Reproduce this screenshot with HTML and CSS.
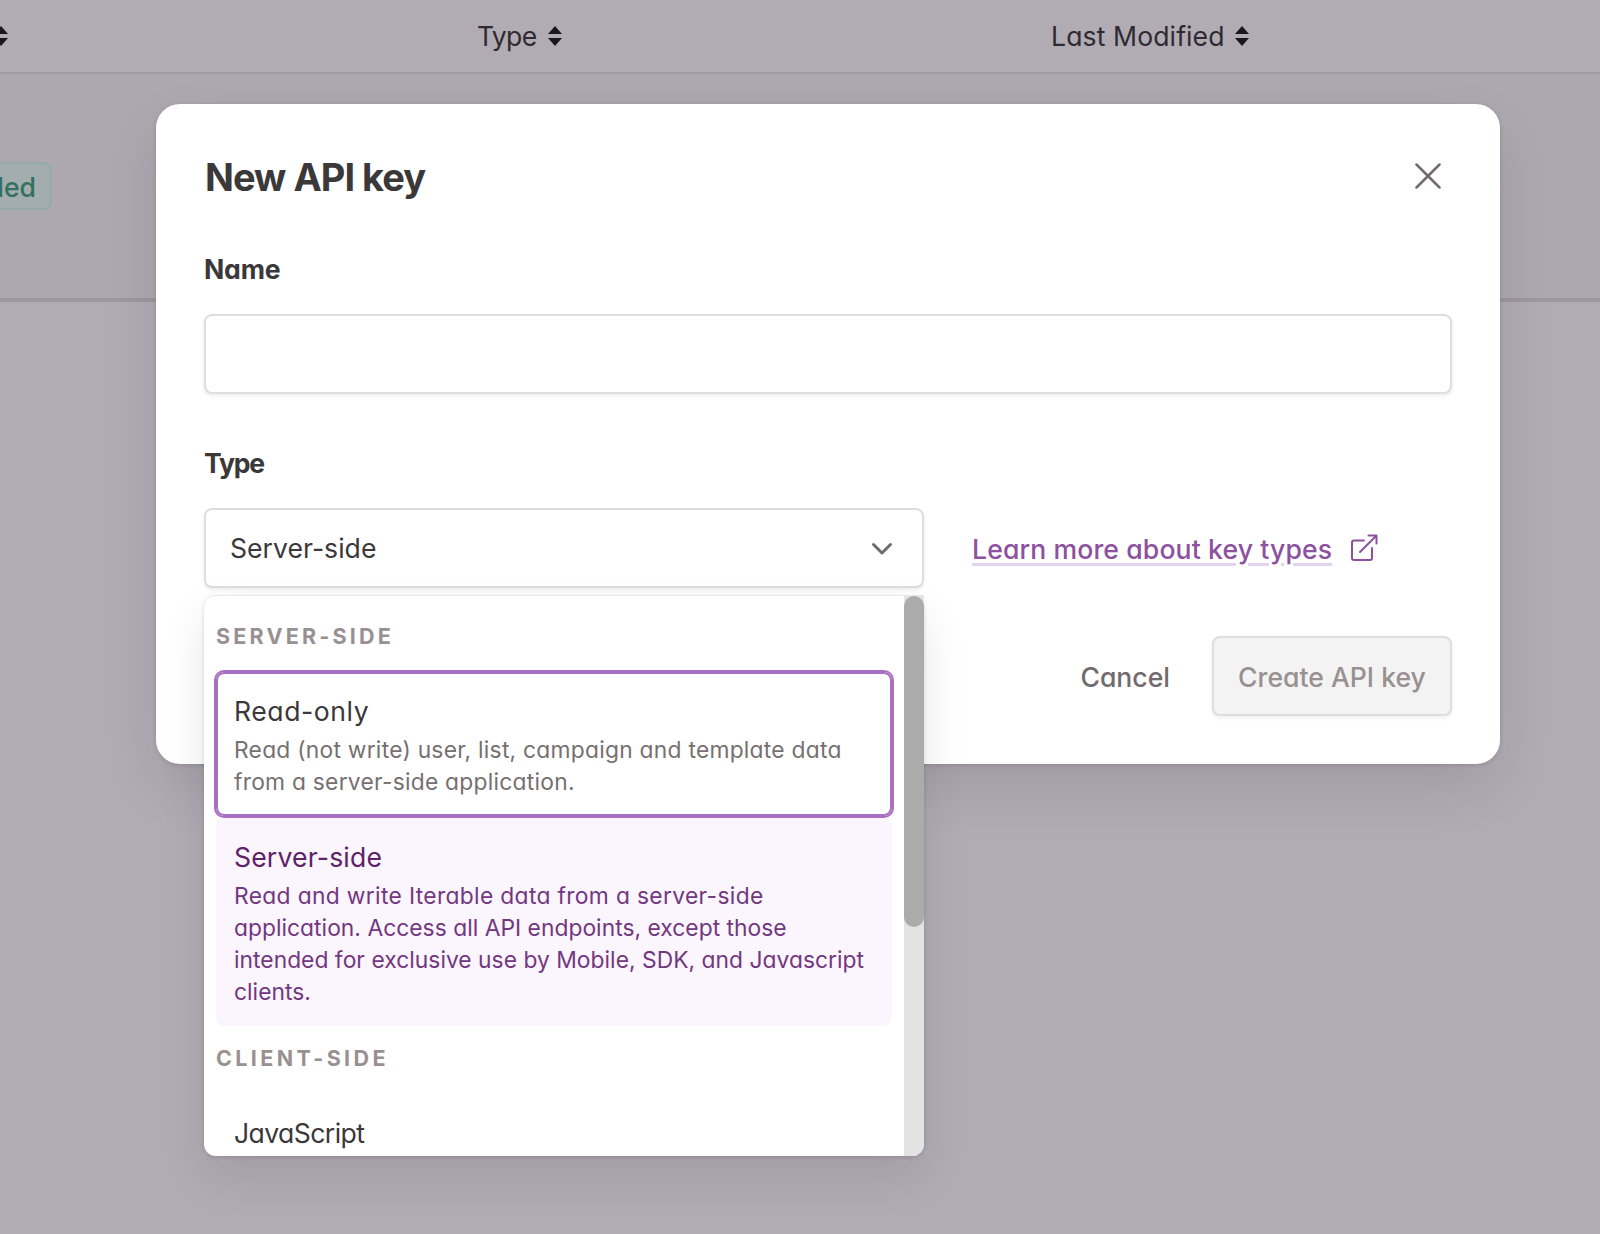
FILE: index.html
```html
<!DOCTYPE html>
<html lang="en">
<head>
<meta charset="utf-8">
<title>New API key</title>
<link rel="stylesheet" href="styles.css">
</head>
<body>
<div class="page">
  <header class="table-head">
    <div class="col"><svg class="sort" viewBox="0 0 14 20"><path d="M7 0l7 8H0zM7 20l7-8H0z"/></svg></div>
    <div class="col"><span class="type-head">Type</span><svg class="sort" viewBox="0 0 14 20"><path d="M7 0l7 8H0zM7 20l7-8H0z"/></svg></div>
    <div class="col"><span class="modified-head">Last Modified</span><svg class="sort" viewBox="0 0 14 20"><path d="M7 0l7 8H0zM7 20l7-8H0z"/></svg></div>
  </header>
  <div class="table-row"><div class="status"><span class="badge">Enabled</span></div></div>
</div>
<main class="modal">
  <div class="modal-head">
    <h1>New API key</h1>
    <svg class="close" viewBox="0 0 26 26"><path d="M1.5 1.5l23 23M24.5 1.5l-23 23"/></svg>
  </div>
  <label class="name-label">Name</label>
  <input class="control name" type="text">
  <label class="type-label">Type</label>
  <div class="type-row">
    <div class="select-wrap">
      <div class="control select"><span>Server-side</span>
        <svg class="chevron" viewBox="0 0 22 14"><path d="M2.5 2.5L11 11l8.500-8.500"/></svg>
      </div>
      <div class="dropdown">
        <div class="options">
          <div class="group">SERVER-SIDE</div>
          <div class="option focused">
            <div class="option-title read">Read-only</div>
            <div class="desc"><span>Read (not write) user, list, campaign and template data</span><span>from a server-side application.</span></div>
          </div>
          <div class="option selected">
            <div class="option-title server">Server-side</div>
            <div class="desc"><span class="wide">Read and write Iterable data from a server-side</span><span class="tight">application. Access all API endpoints, except those</span><span class="tight">intended for exclusive use by Mobile, SDK, and Javascript</span><span class="tight">clients.</span></div>
          </div>
          <div class="group client">CLIENT-SIDE</div>
          <div class="option last"><div class="option-title js">JavaScript</div></div>
        </div>
        <div class="track"><div class="thumb"></div></div>
      </div>
    </div>
    <a class="learn"><span>Learn more about key types</span>
      <svg class="external" viewBox="0 0 28 28"><path d="M14 6.500H4a2 2 0 0 0-2 2V24a2 2 0 0 0 2 2h16a2 2 0 0 0 2-2V14M18.500 1.500h8v8M26.500 1.500L10 18"/></svg>
    </a>
  </div>
  <div class="actions">
    <span class="cancel">Cancel</span>
    <button class="control create" disabled>Create API key</button>
  </div>
</main>
</body>
</html>
```
FILE: styles.css
```css
* { box-sizing: border-box; }
body {
  margin: 0;
  height: 1234px;
  overflow: hidden;
  position: relative;
  background: #b1acb3;
  color: #3b3839;
  font: 430 26.6px/40px Inter, "Noto Sans", sans-serif;
  font-feature-settings: "cv11" 1;
}
svg { display: block; flex: none; }

.table-head {
  display: grid;
  grid-template-columns: 477px 574px 1fr;
  height: 74px;
  border-bottom: 2px solid #9f99a0;
  color: #2f2a31;
}
.col { display: flex; align-items: center; gap: 12px; white-space: nowrap; }
.col:first-child { margin-left: -6px; }
.sort { width: 14px; height: 20px; fill: #1b161d; }
.type-head { letter-spacing: -.7px; }
.modified-head { margin-right: -2px; letter-spacing: .1px; }
.table-row {
  display: flex;
  align-items: center;
  height: 228px;
  background: #ada8af;
  border-bottom: 4px solid #9d979e;
}
.status { display: flex; justify-content: flex-end; width: 52px; }
.badge {
  display: flex;
  align-items: center;
  height: 48px;
  padding: 1px 14px 0;
  border: 2px solid #94aaa8;
  border-radius: 8px;
  background: #a3adb0;
  color: #35705f;
  font-weight: 500;
}

.modal {
  position: absolute;
  left: 156px;
  top: 104px;
  width: 1344px;
  height: 660px;
  padding: 48px;
  border-radius: 24px;
  background: #fff;
  box-shadow: 0 24px 56px -4px rgba(30, 20, 35, .12), 0 1px 4px rgba(30, 20, 35, .14);
  display: flex;
  flex-direction: column;
}
.modal-head {
  display: flex;
  align-items: center;
  justify-content: space-between;
  height: 50px;
  margin-bottom: 46px;
  padding: 0 11px 0 1px;
}
h1 { margin: 0; font-size: 38px; font-weight: 650; letter-spacing: -1px; }
.close { width: 26px; height: 26px; margin-top: -2px; fill: none; stroke: #716b6d; stroke-width: 2.500; stroke-linecap: round; }
label { height: 40px; margin-bottom: 26px; padding-top: 1px; font-weight: 650; }
.name-label { letter-spacing: -.2px; }
.type-label { letter-spacing: -1.2px; }
.control {
  height: 80px;
  border: 2px solid #dedede;
  border-radius: 8px;
  background: #fff;
  box-shadow: 0 2px 4px rgba(0, 0, 0, .07);
}
.name { width: 100%; margin-bottom: 48px; }
.type-row { display: flex; gap: 48px; margin-bottom: 48px; }
.select-wrap { position: relative; width: 720px; }
.select {
  display: flex;
  align-items: center;
  justify-content: space-between;
  padding: 0 29px 0 24px;
}
.chevron { width: 22px; height: 14px; margin-top: 2px; fill: none; stroke: #716b6d; stroke-width: 3; stroke-linecap: round; stroke-linejoin: round; }
.learn { display: flex; align-items: center; gap: 18px; color: #8d519f; font-weight: 550; letter-spacing: .12px; }
.learn span {
  padding-top: 1px;
  text-decoration: underline;
  text-decoration-color: #e4d3ee;
  text-decoration-thickness: 3px;
  text-underline-offset: 4px;
}
.external { width: 28px; height: 28px; fill: none; stroke: #8d519f; stroke-width: 2; stroke-linecap: round; stroke-linejoin: round; }
.actions { display: flex; align-items: center; justify-content: flex-end; gap: 42px; }
.cancel { padding-top: 1px; color: #716b6d; font-weight: 450; }
.create {
  width: 240px;
  padding: 1px 0 0;
  background: #f3f3f3;
  color: #999092;
  font: inherit;
  font-weight: 450;
  font-feature-settings: inherit;
}

.dropdown {
  position: absolute;
  left: 0;
  top: 87px;
  width: 720px;
  height: 561px;
  display: flex;
  border-top: 1px solid #e9e8e9;
  border-radius: 12px 0 12px 12px;
  background: #fff;
  overflow: hidden;
}
.select-wrap::before {
  content: "";
  position: absolute;
  left: 0;
  top: 88px;
  width: 720px;
  height: 560px;
  border-radius: 12px;
  box-shadow: 0 20px 48px -2px rgba(20, 10, 25, .1), 0 1px 4px rgba(20, 10, 25, .14);
}
.options { width: 700px; padding: 8px 12px 0; overflow: hidden; }
.group {
  height: 68px;
  padding: 12px 0 0;
  color: #999092;
  font-size: 21.500px;
  font-weight: 650;
  letter-spacing: 3.200px;
}
.client { letter-spacing: 3.400px; }
.option { width: 676px; padding: 19px 18px 0; border-radius: 8px; }
.focused {
  position: relative;
  height: 144px;
  margin-bottom: 2px;
  padding: 17px 16px 0;
  border: 2px solid #aa6fc2;
  box-shadow: 0 0 0 2px #aa6fc2;
}
.selected { height: 208px; background: #fbf5fd; color: #5e2269; }
.option-title { margin-bottom: 3px; }
.read { letter-spacing: .55px; }
.server { letter-spacing: .15px; }
.js { letter-spacing: -.6px; }
.desc { color: #767071; font-size: 22.800px; line-height: 32px; letter-spacing: .25px; }
.desc span { display: block; white-space: nowrap; }
.desc .wide { letter-spacing: .34px; }
.desc .tight { letter-spacing: .03px; }
.selected .desc { color: #72387f; }
.track { width: 20px; background: #e3e3e3; }
.thumb { height: 331px; border-radius: 10px; background: #ababab; }
```
